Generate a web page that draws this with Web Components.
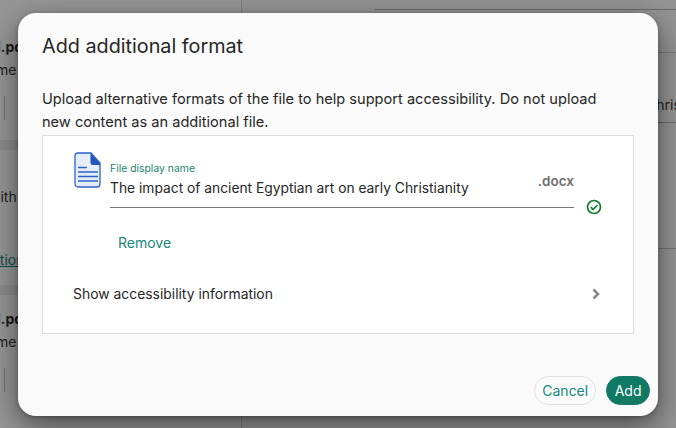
<!DOCTYPE html>
<html>
<head>
<meta charset="utf-8">
<style>
  html, body { margin: 0; height: 100%; overflow: hidden; }
  body { font-family: "Inter", "Liberation Sans", sans-serif; color: #262626; }
</style>
</head>
<body>
<page-backdrop></page-backdrop>
<format-dialog heading="Add additional format">
  <span slot="intro">Upload alternative formats of the file to help support accessibility. Do not upload new content as an additional file.</span>
  <file-row label="File display name" value="The impact of ancient Egyptian art on early Christianity" ext=".docx"></file-row>
  <pill-button slot="actions">Cancel</pill-button>
  <pill-button slot="actions" primary>Add</pill-button>
</format-dialog>

<script>
class PageBackdrop extends HTMLElement {
  constructor() {
    super();
    this.attachShadow({ mode: 'open' }).innerHTML = `
      <style>
        :host { display: grid; grid-template-columns: 242px 1fr; width: 676px; height: 428px; overflow: hidden; background: #949494; font: 14px "Inter", sans-serif; color: #1c1c1c; }
        .col { display: flex; flex-direction: column; }
        .left { background: #969696; border-right: 1px solid #7c7c7c; }
        .card { white-space: nowrap; overflow: hidden; }
        .c1 { height: 140px; border-bottom: 10px solid #8c8c8c; }
        .c2 { height: 135px; border-bottom: 10px solid #8c8c8c; }
        .a { padding-top: 38px; font-weight: 700; }
        .b { padding-top: 6px; }
        .bar { width: 1px; height: 24px; margin: 18px 0 0 4px; background: #707070; }
        .with { padding-top: 38px; margin-left: -11px; }
        .link { margin-top: 46px; margin-left: -16px; color: #0a4f45; text-decoration: underline; }
        .rule { border-top: 1px solid #6a6a6a; }
        .top { margin: 9px 0 0 133px; }
        .r2 { margin: 42px 0 0 416px; border-color: #7c7c7c; }
        .chris { margin: 43px 0 0 404px; white-space: nowrap; }
        .r3 { margin: 9px 0 0 416px; }
        .r4 { margin: 125px 0 0 416px; border-color: #757575; }
      </style>
      <div class="col left">
        <div class="card c1"><div class="a" style="margin-left:-8px">d.pdf</div><div class="b" style="margin-left:-4px">me</div><div class="bar"></div></div>
        <div class="card c2"><div class="with">with</div><div class="link">action</div></div>
        <div class="card"><div class="a" style="margin-left:-8px;padding-top:15px">d.pdf</div><div class="b" style="margin-left:-4px">me</div><div class="bar"></div></div>
      </div>
      <div class="col">
        <div class="rule top"></div>
        <div class="rule r2"></div>
        <div class="chris">Christianity</div>
        <div class="rule r3"></div>
        <div class="rule r4"></div>
      </div>
    `;
  }
}

class FormatDialog extends HTMLElement {
  constructor() {
    super();
    this.attachShadow({ mode: 'open' }).innerHTML = `
      <style>
        :host { position: absolute; left: 18px; top: 13px; width: 640px; height: 403px; box-sizing: border-box; display: flex; flex-direction: column; padding: 20px 8px 11px 24px; background: #fafafa; border-radius: 18px; box-shadow: 0 10px 30px rgba(0,0,0,.5), 0 1px 4px rgba(0,0,0,.25); color: #262626; }
        h2 { margin: 0; font: 400 19.8px/27px "Inter", sans-serif; }
        p { margin: 28px 30px 0 0; font: 400 14.6px/23px "Inter", sans-serif; }
        .box { width: 592px; height: 199px; box-sizing: border-box; margin-top: 1px; background: #fff; border: 1px solid #ddd; }
        footer { margin-top: auto; display: flex; justify-content: flex-end; gap: 10px; }
      </style>
      <h2></h2>
      <p><slot name="intro"></slot></p>
      <div class="box"><slot></slot></div>
      <footer><slot name="actions"></slot></footer>
    `;
    this.shadowRoot.querySelector('h2').textContent = this.getAttribute('heading');
  }
}

class FileRow extends HTMLElement {
  constructor() {
    super();
    this.attachShadow({ mode: 'open' }).innerHTML = `
      <style>
        :host { display: block; padding: 16px 32px 0 30px; font-family: "Inter", sans-serif; }
        .top { display: flex; align-items: flex-start; }
        .doc { flex: none; width: 27px; height: 36px; margin-right: 9px; margin-left: 1px; }
        .field { flex: 1; position: relative; height: 56px; border-bottom: 1px solid #777; box-sizing: border-box; }
        label { display: block; margin-top: 10px; font-size: 10.4px; line-height: 13px; color: #1d8370; }
        .value { margin-top: 3px; font-size: 13.8px; line-height: 20px; color: #262626; }
        .ext { position: absolute; right: 0; top: 21px; font-size: 13.5px; font-weight: 600; color: #6f6f6f; }
        .check { flex: none; width: 16px; height: 16px; margin: 47px -1px 0 12px; }
        .remove { margin: 19px 0 0 45px; font-size: 14px; line-height: 18px; color: #178a7d; }
        .more { display: flex; justify-content: space-between; align-items: center; margin-top: 33px; font-size: 13.9px; line-height: 18px; color: #262626; }
        .chev { width: 10px; height: 12px; }
      </style>
      <div class="top">
        <svg class="doc" viewBox="0 0 27 36">
          <path d="M4 1h13l9 10v21a3 3 0 0 1-3 3H4a3 3 0 0 1-3-3V4a3 3 0 0 1 3-3z" fill="#e6edf9" stroke="#2a63c8" stroke-width="1.3"/>
          <path d="M16.5 1l9.500 10.500V13h-7a2.500 2.500 0 0 1-2.500-2.500z" fill="#1f57bd"/>
          <path d="M4 15.500h9M4 20h20M4 24.500h20M4 29h20" stroke="#2a63c8" stroke-width="1.600" fill="none"/>
        </svg>
        <div class="field">
          <label></label>
          <div class="value"></div>
          <div class="ext"></div>
        </div>
        <svg class="check" viewBox="0 0 16 16">
          <circle cx="8" cy="8" r="6.500" fill="none" stroke="#0f7d2c" stroke-width="1.700"/>
          <path d="M4.800 8.200l2.300 2.300L11.400 6" fill="none" stroke="#0f7d2c" stroke-width="1.700"/>
        </svg>
      </div>
      <div class="remove">Remove</div>
      <div class="more">
        <span>Show accessibility information</span>
        <svg class="chev" viewBox="0 0 10 12"><path d="M2.500 1.500L7 6l-4.500 4.500" fill="none" stroke="#8a8a8a" stroke-width="2.600"/></svg>
      </div>
    `;
    const root = this.shadowRoot;
    root.querySelector('label').textContent = this.getAttribute('label');
    root.querySelector('.value').textContent = this.getAttribute('value');
    root.querySelector('.ext').textContent = this.getAttribute('ext');
  }
}

class PillButton extends HTMLElement {
  constructor() {
    super();
    this.attachShadow({ mode: 'open' }).innerHTML = `
      <style>
        :host { display: inline-flex; align-items: center; justify-content: center; height: 29px; box-sizing: border-box; padding: 0 7px; border-radius: 15px; font: 14px "Inter", sans-serif; background: #fafafa; color: #0f8a7e; border: 1px solid #e0e0e0; }
        :host([primary]) { padding: 0 7.5px; background: #117a65; color: #fff; border-color: #117a65; }
      </style>
      <slot></slot>
    `;
  }
}

customElements.define('page-backdrop', PageBackdrop);
customElements.define('format-dialog', FormatDialog);
customElements.define('file-row', FileRow);
customElements.define('pill-button', PillButton);
</script>
</body>
</html>
